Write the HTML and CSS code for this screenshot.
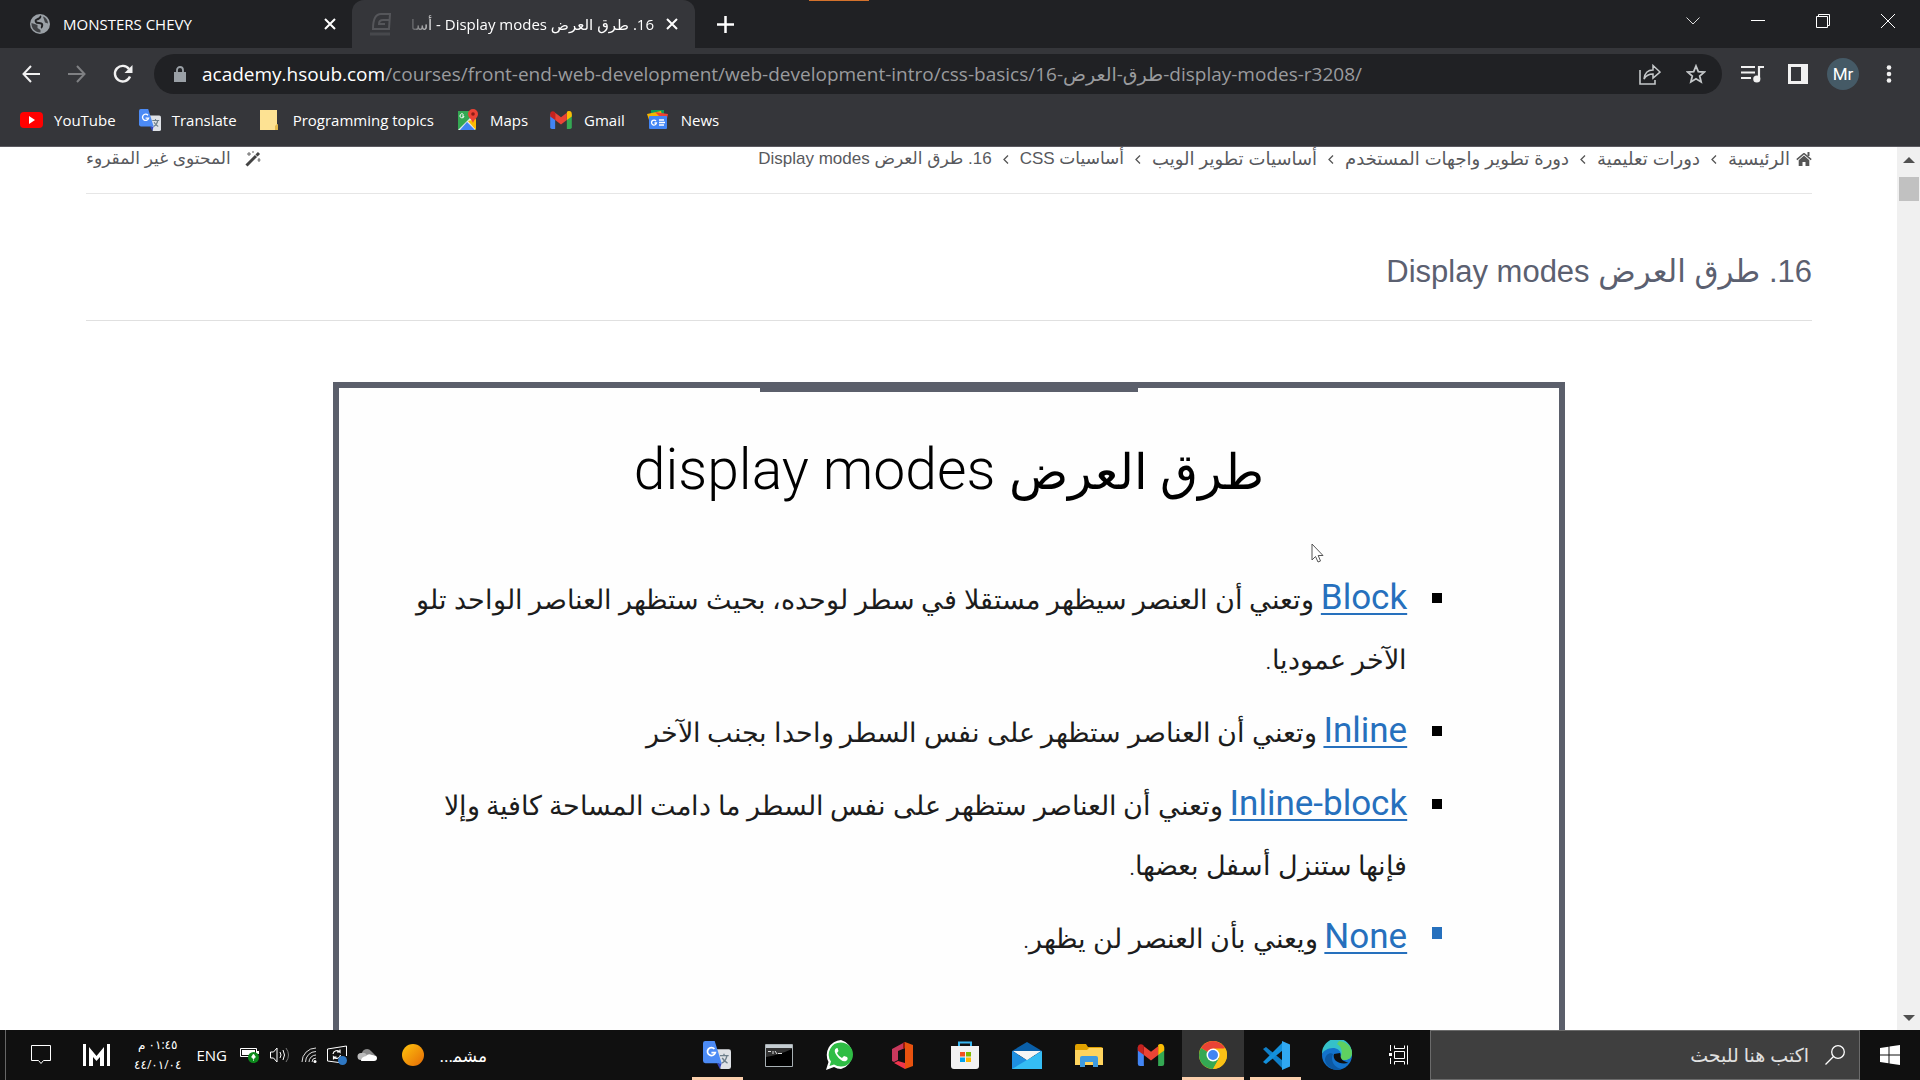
FILE: index.html
```html
<!DOCTYPE html>
<html lang="ar">
<head>
<meta charset="utf-8">
<title>16. طرق العرض Display modes</title>
<link rel="stylesheet" href="styles.css">
</head>
<body>
<svg class="defs" width="0" height="0" aria-hidden="true">
  <symbol id="gmail" viewBox="0 0 24 20"><path d="M0 3v15a2 2 0 0 0 2 2h3.500V9z" fill="#4285f4"/><path d="M24 3v15a2 2 0 0 1-2 2h-3.500V9z" fill="#34a853"/><path d="M18.500 2.500V10L24 6V3.200C24 0 20.500-1 18.500 1z" fill="#fbbc04"/><path d="M5.500 10V2L12 7l6.500-5v8L12 15z" fill="#ea4335"/><path d="M0 3.200V6l5.500 4V1.500C3-.8 0 .5 0 3.200z" fill="#c5221f"/></symbol>
  <symbol id="translate" viewBox="0 0 24 24"><path d="M11 7h11a2 2 0 0 1 2 2v13a2 2 0 0 1-2 2H15z" fill="#dfe2e6"/><path d="M14.500 12.500h7.500M18 11v1.500M20.500 12.500c-.5 3-2.500 5.500-4.500 6.500M16.500 14.500c1 2 2.500 3.500 4.500 4.500" stroke="#6d7f8b" stroke-width="1.200" fill="none"/><path d="M12 19h4l-1.500 5z" fill="#3347c1"/><path d="M2 0h8l6 19H2a2 2 0 0 1-2-2V2a2 2 0 0 1 2-2z" fill="#4c8bf5"/><path d="M9.800 6.800A3.400 3.400 0 1 0 10.500 10H7.200" stroke="#fff" stroke-width="1.500" fill="none"/></symbol>
  <symbol id="x" viewBox="0 0 12 12"><path d="M1 1l10 10M11 1L1 11" stroke="#fff" stroke-width="2"/></symbol>
</svg>

<header class="chrome" dir="ltr">
  <div class="tabs">
    <div class="tab">
      <svg width="20" height="20" viewBox="0 0 20 20"><circle cx="10" cy="10" r="10" fill="#9aa0a6"/><path d="M10 2c1 1 0 2-2 3s-3 1-2 3 5 0 6 2-1 3 0 4" fill="none" stroke="#202124" stroke-width="2"/><path d="M1.500 9l6 2v3l3 2v2.500C5 18.500 1 14 1.500 9zM13 2.500c3 1 5 4 5 7l-3-1-1-3z" fill="#202124" fill-opacity=".75"/></svg>
      <span class="tab-title">MONSTERS CHEVY</span>
      <button class="icon-btn" aria-label="Close tab"><svg width="12" height="12"><use href="#x"/></svg></button>
    </div>
    <div class="tab tab-active">
      <svg width="23" height="24" viewBox="0 0 23 24"><path d="M3 17Q3 2 11 2h9l-1 15z" fill="none" stroke="#55565a" stroke-width="2"/><path d="M20 8h-7q-4 0-4 4h6" fill="none" stroke="#55565a" stroke-width="2"/><path d="M0 22h20" stroke="#47484c" stroke-width="3"/></svg>
      <span class="tab-title tab-fade" dir="rtl">16. طرق العرض Display modes - أسا</span>
      <button class="icon-btn" aria-label="Close tab"><svg width="12" height="12"><use href="#x"/></svg></button>
    </div>
    <button class="icon-btn new-tab" aria-label="New tab"><svg width="17" height="17"><path d="M8.500 0v17M0 8.500h17" stroke="#fff" stroke-width="2.500"/></svg></button>
    <span class="accent"></span>
    <div class="window-controls">
      <button class="icon-btn" aria-label="Search tabs"><svg width="14" height="8"><path d="M.5.5L7 7 13.500.5" fill="none" stroke="#ddd"/></svg></button>
      <button class="icon-btn" aria-label="Minimize"><svg width="14" height="2"><path d="M0 .5h14" stroke="#fff"/></svg></button>
      <button class="icon-btn" aria-label="Restore"><svg width="14" height="14"><path d="M.5 2.500h11v11H.5zM2.500 2.500v-2h11v11h-2" fill="none" stroke="#fff"/></svg></button>
      <button class="icon-btn" aria-label="Close"><svg width="14" height="14"><path d="M0 0l14 14M14 0L0 14" stroke="#fff"/></svg></button>
    </div>
  </div>

  <div class="toolbar">
    <div class="nav">
      <button class="icon-btn" aria-label="Back"><svg width="18" height="18" viewBox="0 0 18 18"><path d="M18 9H1.500M9 1L1.500 9 9 17" fill="none" stroke="#f1f1f1" stroke-width="2"/></svg></button>
      <button class="icon-btn" aria-label="Forward"><svg width="18" height="18" viewBox="0 0 18 18"><path d="M0 9h16.500M9 1l7.500 8L9 17" fill="none" stroke="#7f8083" stroke-width="2"/></svg></button>
      <button class="icon-btn" aria-label="Reload"><svg width="20" height="20" viewBox="0 0 20 20"><path d="M17 12.500A7.800 7.800 0 1 1 16 5" fill="none" stroke="#f1f1f1" stroke-width="2.400"/><path d="M19.500 1v8h-8z" fill="#f1f1f1"/></svg></button>
    </div>
    <form class="omnibox">
      <svg width="12" height="16" viewBox="0 0 12 16"><path d="M0 6h12v10H0z" fill="#9aa0a6"/><path d="M3 6V4a3 3 0 0 1 6 0v2" fill="none" stroke="#9aa0a6" stroke-width="1.800"/></svg>
      <label class="host" for="url">academy.hsoub.com</label>
      <input id="url" class="url" type="text" value="/courses/front-end-web-development/web-development-intro/css-basics/16-طرق-العرض-display-modes-r3208/">
      <button type="button" class="icon-btn" aria-label="Share"><svg width="22" height="21" viewBox="0 0 22 21"><path d="M1 6v14h15v-4" fill="none" stroke="#c4c7c9" stroke-width="1.600"/><path d="M5 15q1-9 9-9V1.500L21 8l-7 6V10q-6 0-9 5z" fill="none" stroke="#c4c7c9" stroke-width="1.500"/></svg></button>
      <button type="button" class="icon-btn" aria-label="Bookmark"><svg width="20" height="20" viewBox="0 0 20 20"><path d="M10 2l2.300 5.600 6 .5-4.600 3.900 1.400 5.900L10 14.800 4.900 17.900 6.300 12 1.700 8.100l6-.5z" fill="none" stroke="#c4c7c9" stroke-width="1.800"/></svg></button>
    </form>
    <div class="actions">
      <button class="icon-btn" aria-label="Media"><svg width="23" height="18" viewBox="0 0 23 18"><path d="M0 2h14M0 7.500h14M0 13h10" stroke="#f1f1f1" stroke-width="2"/><path d="M18 14V2h5" fill="none" stroke="#f1f1f1" stroke-width="2.200"/><circle cx="15.800" cy="14" r="3.600" fill="#f1f1f1"/></svg></button>
      <button class="icon-btn" aria-label="Side panel"><svg width="20" height="20"><path d="M0 0h20v20H0z" fill="#f1f1f1"/><path d="M3 3h10v14H3z" fill="#35363a"/></svg></button>
      <button class="avatar">Mr</button>
      <button class="icon-btn" aria-label="Menu"><svg width="6" height="18"><circle cx="3" cy="2.500" r="2.300" fill="#f1f1f1"/><circle cx="3" cy="9" r="2.300" fill="#f1f1f1"/><circle cx="3" cy="15.500" r="2.300" fill="#f1f1f1"/></svg></button>
    </div>
  </div>

  <nav class="bookmarks">
    <a href="#"><svg width="24" height="22" viewBox="0 0 24 22"><rect x="0" y="3" width="23" height="16" rx="4" fill="#f00"/><path d="M9 7l6 4-6 4z" fill="#fff"/></svg>YouTube</a>
    <a href="#"><svg width="24" height="22"><use href="#translate"/></svg>Translate</a>
    <a href="#"><svg width="24" height="22" viewBox="0 0 24 22"><path d="M1 1h17v14l1 1v5H1z" fill="#fde293"/><path d="M18 15l1 1v5h-3v-4z" fill="#e3b94d"/></svg>Programming topics</a>
    <a href="#"><svg width="24" height="22" viewBox="0 0 24 22"><path d="M2 2h18v19H2z" fill="#34a853"/><path d="M2 21L19 4v17z" fill="#e8eaed"/><path d="M4 21l7-8 8 8z" fill="#4285f4"/><path d="M12 12l8 9h0V10z" fill="#fbbc04"/><path d="M7.500 5.500A2 2 0 1 0 8 7H6" fill="none" stroke="#fff"/><path d="M17 0a5 5 0 0 1 5 5c0 4-4 5-5 9-1-4-5-5-5-9a5 5 0 0 1 5-5z" fill="#ea4335"/><circle cx="17" cy="5" r="1.800" fill="#8c1d18"/></svg>Maps</a>
    <a href="#"><svg width="22" height="18" class="pad"><use href="#gmail"/></svg>Gmail</a>
    <a href="#"><svg width="24" height="22" viewBox="0 0 24 22"><path d="M4 1h13v8H4z" fill="#0c9d58"/><path d="M0 5l14-3 2 9H2z" fill="#f4b400"/><path d="M8 3l13 2-2 9z" fill="#ea4335"/><rect x="2" y="7" width="18" height="13" rx="1" fill="#4285f4"/><path d="M9 12a2.500 2.500 0 1 0 .5 2H7.500M12 11h5M12 13.500h6M12 16h5" fill="none" stroke="#fff" stroke-width="1.300"/></svg>News</a>
  </nav>
</header>

<main class="viewport" dir="ltr">
  <div class="page" dir="rtl">
    <div class="crumb-row">
      <nav class="crumbs">
        <a href="#" class="home"><svg width="16" height="14" viewBox="0 0 16 14"><path d="M8 1.500L.8 7.700M8 1.500l7.200 6.200" stroke="#555" stroke-width="1.600"/><path d="M11.500 0h2v4h-2zM8 3.600l5.300 4.600V14H9.500v-4h-3v4H2.700V8.200z" fill="#555"/></svg>الرئيسية</a>
        <svg class="sep" width="6" height="9"><path d="M5 .5l-4 4 4 4" fill="none" stroke="#555" stroke-width="1.300"/></svg>
        <a href="#">دورات تعليمية</a>
        <svg class="sep" width="6" height="9"><path d="M5 .5l-4 4 4 4" fill="none" stroke="#555" stroke-width="1.300"/></svg>
        <a href="#">دورة تطوير واجهات المستخدم</a>
        <svg class="sep" width="6" height="9"><path d="M5 .5l-4 4 4 4" fill="none" stroke="#555" stroke-width="1.300"/></svg>
        <a href="#">أساسيات تطوير الويب</a>
        <svg class="sep" width="6" height="9"><path d="M5 .5l-4 4 4 4" fill="none" stroke="#555" stroke-width="1.300"/></svg>
        <a href="#" class="small">أساسيات CSS</a>
        <svg class="sep" width="6" height="9"><path d="M5 .5l-4 4 4 4" fill="none" stroke="#555" stroke-width="1.300"/></svg>
        <span class="small">16. طرق العرض Display modes</span>
      </nav>
      <a href="#" class="unread"><svg width="16" height="16" viewBox="0 0 16 16"><path d="M1.500 14.500L11 5" stroke="#444" stroke-width="3"/><path d="M11.500 4.500l2.500-2.500" stroke="#444" stroke-width="3"/><path d="M4 1v4M2 3h4M8 0v2M14 7v4M12.500 9h3" stroke="#666"/></svg>المحتوى غير المقروء</a>
    </div>
    <h1 class="title">16. طرق العرض Display modes</h1>
    <article class="slide">
      <div class="notch"></div>
      <h2 class="slide-title"><span class="slide-ar">طرق العرض</span> display modes</h2>
      <ul class="modes">
        <li><p><a href="#">Block</a> وتعني أن العنصر سيظهر مستقلا في سطر لوحده، بحيث ستظهر العناصر الواحد تلو<br>الآخر عموديا.</p></li>
        <li><p><a href="#">Inline</a> وتعني أن العناصر ستظهر على نفس السطر واحدا بجنب الآخر</p></li>
        <li><p><a href="#">Inline-block</a> وتعني أن العناصر ستظهر على نفس السطر ما دامت المساحة كافية وإلا<br>فإنها ستنزل أسفل بعضها.</p></li>
        <li class="picked"><p><a href="#">None</a> ويعني بأن العنصر لن يظهر.</p></li>
      </ul>
      <svg class="pointer" width="14" height="20" viewBox="0 0 14 20"><path d="M1 1v16l3.500-3.500L7 19l2.500-1-2.300-5.500H12z" fill="#fff" stroke="#555"/></svg>
    </article>
  </div>
  <div class="scrollbar" aria-hidden="true">
    <i class="arrow up"></i><i class="thumb"></i><i class="arrow down"></i>
  </div>
</main>

<footer class="taskbar" dir="ltr">
  <div class="tray">
    <button class="icon-btn notices" aria-label="Notifications"><svg width="20" height="20"><path d="M.5.5h19v15h-7L10 18.500 7.500 15.500h-7z" fill="none" stroke="#fff"/></svg></button>
    <svg class="mlogo" width="27" height="22" viewBox="0 0 27 22"><path d="M0 0h3v22H0zM24 0h3v22h-3zM6 22V3l7.500 9L21 3v19h-4v-9l-3.500 4L10 13v9z" fill="#fff"/></svg>
    <div class="clock" dir="rtl"><span>٠١:٤٥ م</span><span>٤٤/٠١/٠٤</span></div>
    <span class="lang">ENG</span>
    <svg width="20" height="16" viewBox="0 0 20 16"><path d="M.5 1.500h16v8H.5z" fill="none" stroke="#fff"/><path d="M2 3h13v5H2zM17 4h2v3h-2z" fill="#fff"/><circle cx="13.500" cy="10.500" r="5.500" fill="#0c8a1c"/><path d="M13.500 7l2 3-2 2-2-2zM13.500 11v3" fill="#fff" stroke="#fff" stroke-width=".6"/></svg>
    <svg width="21" height="16" viewBox="0 0 21 16"><path d="M.5 5h3L7 1v14l-3.500-4h-3zM10 5q2 3 0 6M13 3q3 5 0 10" fill="none" stroke="#fff"/><path d="M16 1q5 7 0 14" fill="none" stroke="#777"/></svg>
    <svg width="16" height="16" viewBox="0 0 16 16"><path d="M1 15A14 14 0 0 1 15 1M4.500 15A10.500 10.500 0 0 1 15 4.500M8 15a7 7 0 0 1 7-7M11 15a4 4 0 0 1 4-4" fill="none" stroke="#ddd"/><circle cx="14" cy="14.500" r="1.500" fill="#fff"/></svg>
    <svg width="20" height="20" viewBox="0 0 20 20"><path d="M12 17.500L.5 16V4L19.500 1v10" fill="none" stroke="#fff"/><path d="M6 9a4 4 0 0 1 7-2V4.500M13 7h-3M13.500 10a4 4 0 0 1-7 2v2.500M6.500 12h3" fill="none" stroke="#fff" stroke-width="1.200"/><circle cx="15.500" cy="15.500" r="4.500" fill="#2f78c4"/></svg>
    <svg width="20" height="14" viewBox="0 0 20 14"><path d="M5 6a5 5 0 0 1 9-3l4 4-8 2z" fill="#8a8a8a"/><path d="M4 5q4-1 6 2l-4 5H4A3.500 3.500 0 0 1 4 5z" fill="#bbb"/><path d="M4 13q0-4 5-5 2-3 6-1 5 0 5 3t-3 3z" fill="#fff"/></svg>
    <svg class="sun" width="22" height="22"><defs><linearGradient id="sun" x1="0" y1="0" x2="1" y2="1"><stop offset="0" stop-color="#ffc50d"/><stop offset="1" stop-color="#e56a06"/></linearGradient></defs><circle cx="11" cy="11" r="11" fill="url(#sun)"/></svg>
    <span class="weather" dir="rtl">مشم&zwj;...</span>
  </div>
  <div class="apps">
    <button class="app running" aria-label="Google Translate"><svg width="28" height="28"><use href="#translate"/></svg></button>
    <button class="app" aria-label="Command Prompt"><svg width="28" height="23" viewBox="0 0 28 23"><path d="M.5.500h27v22H.5z" fill="#000" stroke="#a8b0b4"/><path d="M1 1h26v3H1z" fill="#c5cdd2"/><path d="M1 13Q14 11 27 5V4H1z" fill="#333"/><path d="M3 7.500h3M8 7v3M10 7l2 3M13 9.500h4" stroke="#ddd"/></svg></button>
    <button class="app" aria-label="WhatsApp"><svg width="30" height="30" viewBox="0 0 30 30"><path d="M15 0a15 15 0 0 1 0 29q-4 0-7-2l-8 3 2.500-8A15 15 0 0 1 15 0z" fill="#fff"/><path d="M15 2.500a12 12 0 0 1 0 24q-4 0-7-2L3.500 26 5 21.500A12 12 0 0 1 15 2.500z" fill="#2fbd45"/><path d="M11 8c-3 1-3 4 0 8s6 6 9 5c2-1 2-3 1-4l-3-1-2 2c-2-1-4-3-5-5l1.500-2L11.500 8z" fill="#fff"/></svg></button>
    <button class="app" aria-label="Office"><svg width="24" height="27" viewBox="0 0 24 27"><path d="M1 7L14 0v6l-7 3v9l-4 2-2-1z" fill="#c8385c"/><path d="M14 0l8 3v21l-8 3V6z" fill="#e8520f"/><path d="M3 21l4-2 7 2v6z" fill="#f0344c"/><path d="M14 0l-2 1v6l2-1z" fill="#9c1a0c"/></svg></button>
    <button class="app" aria-label="Microsoft Store"><svg width="28" height="28" viewBox="0 0 28 28"><path d="M8 7V1.500h12V7" fill="none" stroke="#38b6f1" stroke-width="2"/><path d="M0 5h28v20q0 3-3 3H3q-3 0-3-3z" fill="#f2f2f2"/><path d="M9 11h5v4.500H9z" fill="#f25022"/><path d="M15 11h5v4.500h-5z" fill="#7fba00"/><path d="M9 16.500h5V21H9z" fill="#00a4ef"/><path d="M15 16.500h5V21h-5z" fill="#ffb900"/></svg></button>
    <button class="app" aria-label="Mail"><svg width="30" height="27" viewBox="0 0 30 27"><path d="M0 9L15 0l15 9v4H0z" fill="#0a5fa8"/><path d="M2 9h26L15 18z" fill="#f5f5f5"/><path d="M0 9l30 18H0z" fill="#1e8fe0"/><path d="M30 9v18H0z" fill="#35bdf4"/><path d="M1 9h28L15 18z" fill="#f5f5f5"/></svg></button>
    <button class="app" aria-label="File Explorer"><svg width="28" height="23" viewBox="0 0 28 23"><path d="M0 2q0-2 2-2h9l2 3h13q2 0 2 2v5H0z" fill="#e0a100"/><path d="M0 6h12l2-2h14v17H0z" fill="#ffd45e"/><path d="M5 23v-9q0-2 2-2h14q2 0 2 2v9h-5v-5h-8v5z" fill="#3f9be0"/></svg></button>
    <button class="app" aria-label="Gmail"><svg width="28" height="22"><use href="#gmail"/></svg></button>
    <button class="app focused" aria-label="Chrome"><svg width="28" height="28" viewBox="0 0 28 28"><circle cx="14" cy="14" r="14" fill="#fbbc04"/><path d="M14 14L1.900 7a14 14 0 0 1 24.200 0z" fill="#ea4335"/><path d="M1.900 7A14 14 0 0 0 14 28l6-10.500-6-3.500z" fill="#34a853"/><path d="M14 7.500h12.400A14 14 0 0 1 14 28l6-10.500z" fill="#fbc116"/><circle cx="14" cy="14" r="6.500" fill="#fff"/><circle cx="14" cy="14" r="5" fill="#4285f4"/></svg></button>
    <button class="app running" aria-label="Visual Studio Code"><svg width="29" height="29" viewBox="0 0 29 29"><path d="M2 8l3-2 17 14v8z" fill="#0f7fc8"/><path d="M2 21l3 2L22 9V1z" fill="#1390db"/><path d="M21 0l8 3.500v22L21 29z" fill="#30a8f2"/></svg></button>
    <button class="app" aria-label="Edge"><svg width="30" height="30" viewBox="0 0 30 30"><circle cx="15" cy="15" r="15" fill="#1373cc"/><path d="M0 14A15 15 0 0 1 30 13c0 5-4 7-7 7-4 0-5-2-4-4 1-5-4-8-8-8C6 8 1 11 0 14z" fill="#35c1c9"/><path d="M17 1c9 1 13 7 13 12 0 5-4 7-7 7-4 0-5-2-4-4 2-5 0-10-4-12z" fill="#5fd160"/><path d="M11 14c-3 6 1 14 9 15-8 3-16-2-17-9 0-5 5-8 8-6z" fill="#0c59a4"/><path d="M12 14c-2 6 5 11 14 9-1-1-6-2-7-5-1-2 0-3-1-5z" fill="#101010"/></svg></button>
    <button class="app" aria-label="Task view"><svg width="21" height="20" viewBox="0 0 21 20"><path d="M1.500 0v6M1.500 13v6M5.500.500v3h10v-3M5.500 6.500h10v7h-10zM5.500 19.500v-3h10v3M18.500.500v19" fill="none" stroke="#fff"/><path d="M0 8h3v3H0z" fill="#fff"/></svg></button>
  </div>
  <label class="search" dir="rtl">
    <svg width="20" height="20"><circle cx="13" cy="7" r="6.300" fill="none" stroke="#fff" stroke-width="1.300"/><path d="M8.500 11.500L.5 19.500" stroke="#fff" stroke-width="1.300"/></svg>
    <input type="text" placeholder="اكتب هنا للبحث" aria-label="بحث">
  </label>
  <button class="icon-btn start" aria-label="Start"><svg width="20" height="20" viewBox="0 0 20 20"><path d="M0 3l8.500-1.200V9.500H0zM9.500 1.600L20 0v9.500H9.500zM0 10.500h8.500v7.700L0 17zM9.500 10.500H20V20L9.500 18.400z" fill="#fff"/></svg></button>
</footer>
</body>
</html>
```

FILE: styles.css
```css
* { box-sizing: border-box; }
body {
  margin: 0;
  height: 100vh;
  display: flex;
  flex-direction: column;
  overflow: hidden;
  background: #fff;
  font-family: "Open Sans", "DejaVu Sans", sans-serif;
  font-size: 15px;
}
.defs { position: absolute; }
svg { flex: none; display: block; }
button, input { font: inherit; color: inherit; border: 0; background: none; padding: 0; outline: 0; }
a { color: inherit; text-decoration: none; }
.icon-btn { display: flex; align-items: center; justify-content: center; flex: none; }

/* browser frame */
.chrome { background: #35363a; color: #fff; border-bottom: 1px solid #5b5a60; }
.tabs { display: flex; height: 48px; background: #202124; }
.tab { width: 352px; padding: 0 16px 0 30px; display: flex; align-items: center; gap: 13px; }
.tab-active { width: 343px; padding: 0 17px 0 18px; gap: 12px; background: #35363a; border-radius: 12px 12px 0 0; }
.tab-title { flex: 1; white-space: nowrap; }
.tab-fade { -webkit-mask-image: linear-gradient(to right, transparent, #000 32px); mask-image: linear-gradient(to right, transparent, #000 32px); }
.new-tab { width: 61px; }
.accent { width: 60px; height: 1px; margin-left: 53px; background: #d4722c; }
.window-controls { display: flex; margin-left: auto; height: 42px; }
.window-controls .icon-btn { width: 65px; }

.toolbar { display: flex; align-items: center; height: 52px; }
.nav { display: flex; width: 154px; padding-left: 8px; }
.nav .icon-btn { width: 46px; }
.omnibox { flex: 1; display: flex; align-items: center; height: 40px; padding: 0 16px 0 20px; border-radius: 20px; background: #202124; font-size: 19px; }
.host { margin-left: 16px; }
.url { flex: 1; color: #9a9b9e; }
.omnibox .icon-btn { margin-left: 25px; }
.actions { display: flex; align-items: center; width: 198px; padding-left: 8px; }
.actions .icon-btn { width: 45px; }
.avatar { width: 32px; height: 32px; margin: 0 7px; border-radius: 50%; background: #455a66; color: #fff; font-family: Roboto, sans-serif; font-size: 17px; }

.bookmarks { display: flex; align-items: center; gap: 22px; height: 46px; padding: 0 20px 6px; }
.bookmarks a { display: flex; align-items: center; gap: 10px; }
.pad { margin-right: 2px; }

/* page */
.viewport { flex: 1; min-height: 0; display: flex; }
.page { flex: 1; min-width: 0; overflow: hidden; padding: 0 85px 0 86px; color: #58595d; }
.crumb-row { display: flex; justify-content: space-between; height: 47px; border-bottom: 1px solid #e6e6e6; font-family: "Liberation Sans", "DejaVu Sans", sans-serif; font-size: 18px; line-height: 24px; white-space: nowrap; }
.crumbs { display: flex; gap: 11px; height: 24px; align-items: center; }
.home, .unread { display: flex; align-items: center; gap: 6px; height: 24px; }
.unread { gap: 14px; font-size: 17px; }
.small { font-size: 17px; }
.title { margin: 0; padding: 54px 0 24px; border-bottom: 1px solid #e0e0e0; color: #5b6070; font: 31px/48px "Liberation Sans", "DejaVu Sans", sans-serif; }
.slide { position: relative; width: 71.4%; min-height: 1000px; margin: 61px auto 0; border: 6px solid #5b5f6b; color: #1c1c1c; background: #fefefe; }
.notch { width: 31%; height: 4px; margin: 0 auto; background: #5b5f6b; }
.slide-title { margin: 38px 0 60px; height: 80px; text-align: center; color: #000; font: 300 57px/80px Roboto, "DejaVu Sans", sans-serif; }
.slide-ar { font-size: 49px; }
.modes { list-style: none; margin: 0; padding: 0 117px 0 0; display: flex; flex-direction: column; gap: 13px; font: 300 27px/60px Roboto, "DejaVu Sans", sans-serif; }
.modes li { display: flex; gap: 25px; white-space: nowrap; }
.modes li::before { content: ""; width: 10px; height: 10px; margin-top: 23px; background: #000; }
.modes .picked::before { background: #2670bd; height: 12px; margin-top: 18px; }
.modes p { margin: 0; }
.modes a { color: #2670bd; font-size: 35px; font-weight: 400; line-height: 48px; text-decoration: underline; text-decoration-thickness: 2px; text-underline-offset: 4px; text-decoration-skip-ink: none; }
.pointer { position: absolute; right: 234px; top: 155px; }

.scrollbar { width: 23px; background: #f0f0f0; display: flex; flex-direction: column; align-items: center; padding: 10px 0 9px; }
.arrow { border: 6px solid transparent; }
.up { border-top: 0; border-bottom-color: #505050; }
.down { border-bottom: 0; border-top-color: #505050; margin-top: auto; }
.thumb { width: 20px; height: 24px; margin-top: 14px; background: #c1c1c1; }

/* taskbar */
.taskbar { display: flex; height: 50px; background: #101010; color: #fff; }
.tray { display: flex; align-items: center; margin-left: 5px; border-left: 1px solid #666; gap: 10px; }
.notices { width: 45px; margin-left: 12px; }
.mlogo { margin: 0 14px 0 10px; }
.clock { display: flex; flex-direction: column; align-items: center; font-size: 12px; line-height: 20px; }
.lang { margin: 0 5px 0 5px; width: 29px; }
.sun { margin-left: 15px; }
.weather { font-size: 17px; margin-left: 5px; }
.apps { display: flex; margin-left: auto; }
.app { display: flex; align-items: center; justify-content: center; width: 62px; }
.running { background: linear-gradient(#fbcfac, #fbcfac) no-repeat center bottom / 51px 3px; }
.focused { background: linear-gradient(#fbcfac, #fbcfac) no-repeat center bottom / 100% 3px #333; }
.search { display: flex; align-items: center; gap: 16px; width: 430px; padding: 0 14px; background: #3f3f3f; border: 1px solid #6b6b6b; font-size: 19px; }
.search input { flex: 1; min-width: 0; }
.search input::placeholder { color: #e0e0e0; opacity: 1; }
.start { width: 60px; }
```
